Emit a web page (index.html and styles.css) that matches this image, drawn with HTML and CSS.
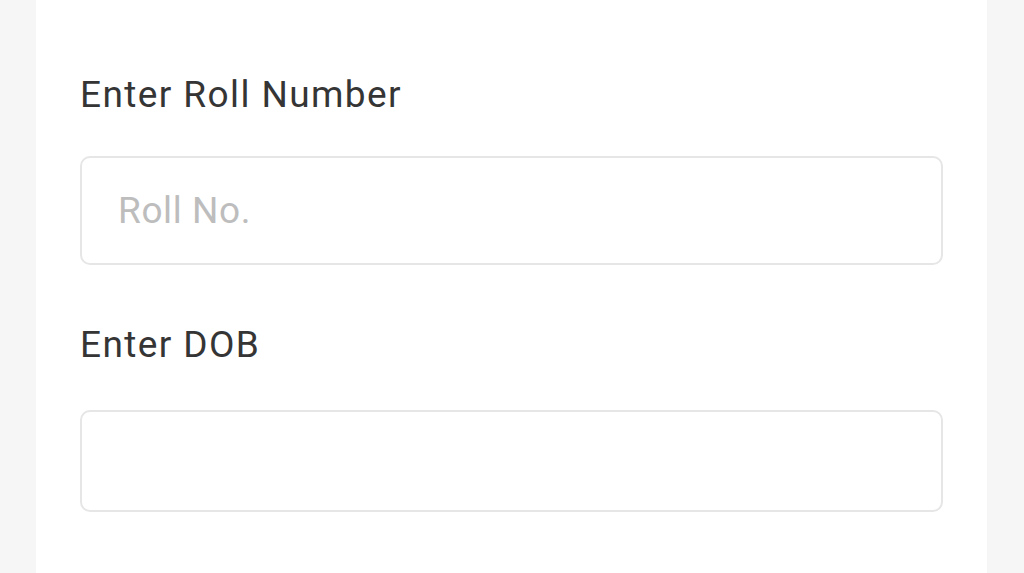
FILE: index.html
```html
<!DOCTYPE html>
<html lang="en">
<head>
    <meta charset="UTF-8">
    <meta name="viewport" content="width=device-width, initial-scale=1.0">
    <title>Student Result</title>
    <link rel="stylesheet" href="styles.css">
</head>
<body>
    <div class="container">
        <form class="result-form">
            <label for="roll-no">Enter Roll Number</label>
            <input type="text" id="roll-no" placeholder="Roll No.">

            <label for="dob" class="dob-label">Enter DOB</label>
            <input type="text" id="dob" class="dob-input">
        </form>
    </div>
</body>
</html>
```

FILE: styles.css
```css
body {
    font-family: Roboto, "Noto Sans", Arial, sans-serif;
    margin: 0;
    min-height: 100vh;
    background-color: #f6f6f6;
}

.container {
    background-color: #fff;
    margin: 0 37px 0 36px;
    min-height: 100vh;
    padding: 74px 44px 40px;
    box-sizing: border-box;
}

.result-form {
    display: flex;
    flex-direction: column;
}

.result-form label {
    font-size: 37px;
    line-height: 42px;
    letter-spacing: 1.4px;
    color: #353535;
    margin-bottom: 40px;
}

.result-form input {
    font-family: inherit;
    font-size: 37px;
    letter-spacing: 0.6px;
    color: #333;
    height: 109px;
    box-sizing: border-box;
    padding: 0 36px;
    border: 2px solid #e6e6e6;
    border-radius: 10px;
    outline: none;
    background-color: #fff;
}

.result-form input::placeholder {
    color: #bdbdbd;
}

.result-form .dob-label {
    margin-top: 59px;
    margin-bottom: 44px;
}

.result-form .dob-input {
    height: 102px;
}
```
